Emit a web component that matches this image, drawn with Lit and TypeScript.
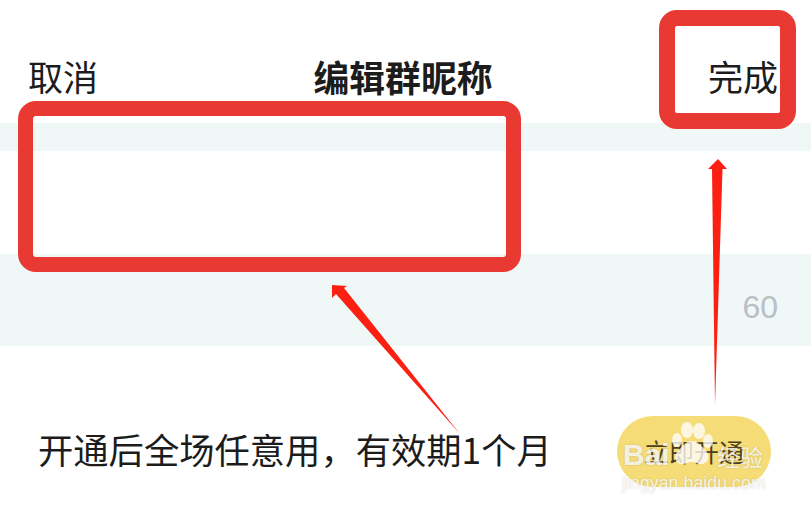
import { LitElement, html, css } from "lit";
import { customElement } from "lit/decorators.js";

@customElement("app-root")
export class AppRoot extends LitElement {
  static styles = css`
    :host {
      display: block;
      position: relative;
      width: 811px;
      height: 509px;
      overflow: hidden;
      background: #fff;
      font-family: "Noto Sans CJK SC", "Noto Sans", sans-serif;
      color: #1c1c1c;
    }
    .header {
      height: 123px;
      box-sizing: border-box;
      padding: 52px 33px 0 28px;
      display: grid;
      grid-template-columns: 1fr auto 1fr;
      align-items: start;
      font-size: 35px;
      line-height: 48px;
    }
    .title { font-size: 35.8px; font-weight: 700; }
    .done { text-align: right; }
    .band-a { height: 28px; background: #f0f7f7; }
    .gap-a { height: 103px; }
    .band-b {
      height: 92px;
      background: #f0f7f7;
      display: flex;
      justify-content: flex-end;
      align-items: flex-end;
      padding-right: 33px;
      box-sizing: border-box;
    }
    .count {
      font-family: "Liberation Sans", Arial, sans-serif;
      font-size: 32px;
      line-height: 78px;
      color: #b9bfc6;
    }
    .promo {
      display: flex;
      justify-content: space-between;
      align-items: center;
      padding: 70px 40px 0 38px;
    }
    .promo-text { font-size: 35.3px; line-height: 46px; padding-bottom: 6px; }
    .cta {
      width: 154px;
      height: 71px;
      border-radius: 36px;
      background: #f5dc76;
      font-size: 25px;
      line-height: 70px;
      text-align: center;
      color: #4c3f1e;
      white-space: nowrap;
    }
    .box {
      position: absolute;
      box-sizing: border-box;
      border-style: solid;
      border-color: #e83a33;
    }
    .box-name { left: 18px; top: 101px; width: 503px; height: 171px; border-width: 15px; border-radius: 18px; }
    .box-done { left: 659px; top: 10px; width: 137px; height: 119px; border-width: 16px; border-radius: 18px; }
    .overlay { position: absolute; left: 0; top: 0; width: 811px; height: 509px; pointer-events: none; }
    .mark {
      position: absolute;
      color: rgba(255, 255, 255, 0.8);
      white-space: nowrap;
      text-shadow: 0 0 2px rgba(130, 130, 130, 0.4);
    }
    .mark-bai { left: 623px; top: 438px; font-family: "Liberation Sans", Arial, sans-serif; font-weight: 700; font-size: 30px; line-height: 34px; }
    .mark-exp { left: 717px; top: 441px; font-size: 23px; line-height: 30px; }
    .mark-url { left: 622px; top: 472px; font-family: "Liberation Sans", Arial, sans-serif; font-size: 17.5px; line-height: 22px; letter-spacing: 0.15px; }
  `;

  render() {
    return html`
      <div class="header">
        <div>取消</div>
        <div class="title">编辑群昵称</div>
        <div class="done">完成</div>
      </div>
      <div class="band-a"></div>
      <div class="gap-a"></div>
      <div class="band-b"><span class="count">60</span></div>
      <div class="promo">
        <div class="promo-text">开通后全场任意用，有效期1个月</div>
        <div class="cta">立即开通</div>
      </div>
      <div class="box box-name"></div>
      <div class="box box-done"></div>
      <svg class="overlay" viewBox="0 0 811 509">
        <polygon points="332,285 347,286 344,288 460,434 336,294 332,298" fill="#fb2011"/>
        <polygon points="718,159 727,169 722.5,169 715,405 712,169 708,169" fill="#fb2011"/>
        <g fill="rgba(255,255,255,0.78)">
          <ellipse cx="687" cy="430" rx="6" ry="8"/>
          <ellipse cx="699" cy="431" rx="6" ry="8"/>
          <ellipse cx="677" cy="440" rx="5" ry="7"/>
          <ellipse cx="708" cy="441" rx="5" ry="7"/>
          <path d="M692 441c6 0 9 5 14 10 5 5 2 13-5 13-4 0-6-2-9-2s-6 2-10 2c-7 0-9-8-4-13 5-5 8-10 14-10z"/>
        </g>
      </svg>
      <span class="mark mark-bai">Bai</span>
      <span class="mark mark-exp">经验</span>
      <span class="mark mark-url">jingyan.baidu.com</span>
    `;
  }
}
